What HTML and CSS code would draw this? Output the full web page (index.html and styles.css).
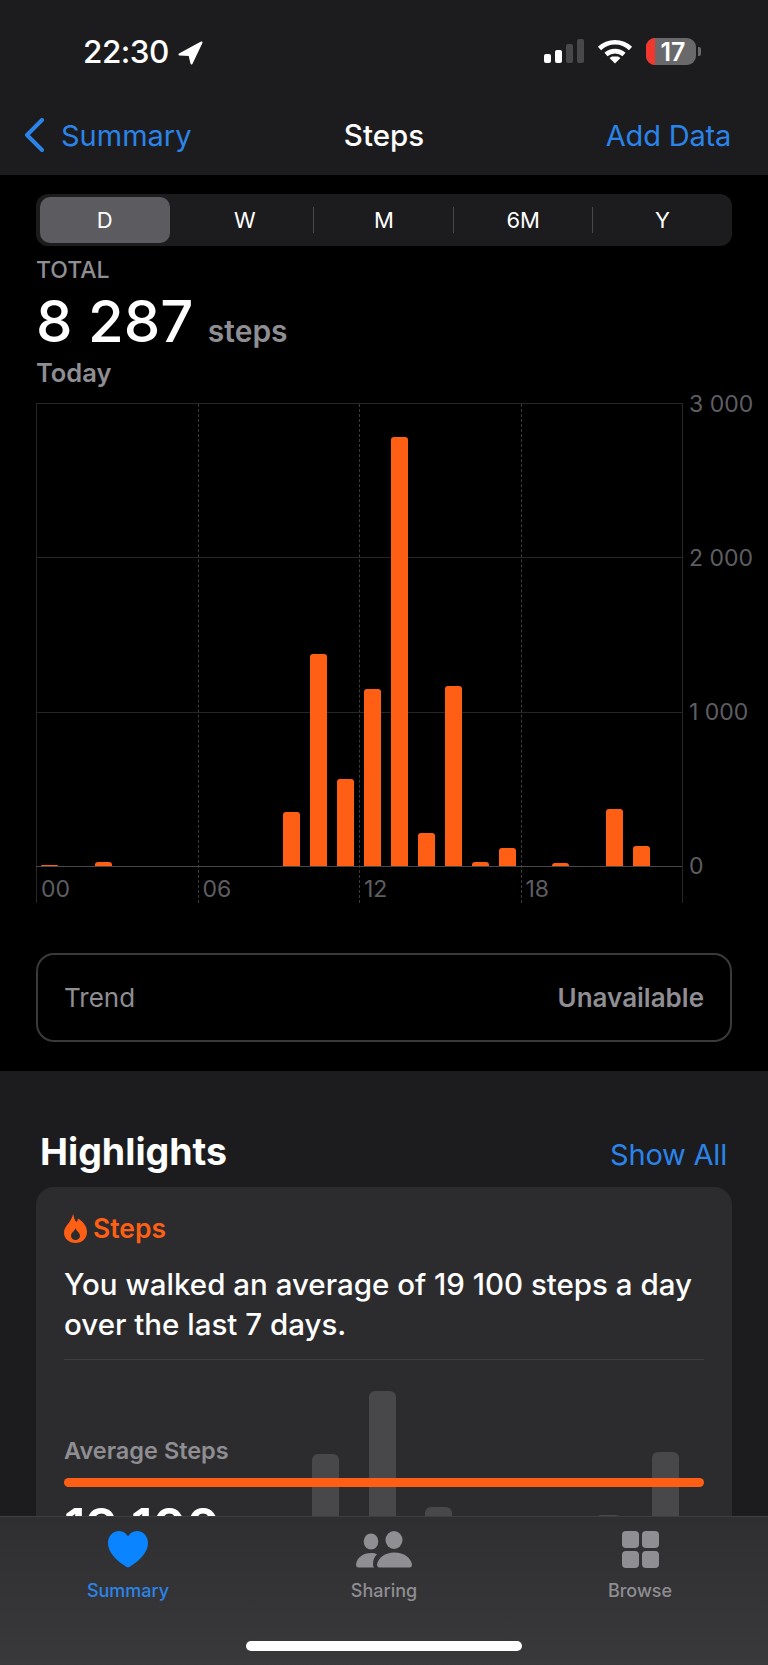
FILE: index.html
```html
<!DOCTYPE html>
<html lang="en">

<head>
    <meta charset="UTF-8">
    <title>Steps</title>
    <link rel="stylesheet" href="styles.css">
</head>

<body>
    <div class="phone">
        <header class="top">
            <div class="status">
                <div class="status-time">
                    <span>22:30</span>
                    <svg class="arrow" viewBox="0 0 25 24"><path d="M23.5 1.5 L1.5 13.5 L11.5 14 L13.5 22.5 Z" /></svg>
                </div>
                <div class="status-icons">
                    <div class="signal">
                        <i class="s1"></i>
                        <i class="s2"></i>
                        <i class="s3"></i>
                        <i class="s4"></i>
                    </div>
                    <svg class="wifi" viewBox="0 0 36 25">
                        <path d="M2.5 9.5 C11 1.2 25 1.2 33.5 9.5" />
                        <path d="M9 15.5 C14 11 22 11 27 15.5" />
                        <polygon class="wifi-dot" points="18,24.5 12.5,19 15,17.5 21,17.5 23.5,19" />
                    </svg>
                    <div class="battery">
                        <div class="battery-body">
                            <span class="battery-low"></span>
                            <span class="battery-num">17</span>
                        </div>
                        <span class="battery-nub"></span>
                    </div>
                </div>
            </div>
            <nav class="nav">
                <a class="nav-back">
                    <svg class="chevron" viewBox="0 0 21 34"><polyline points="18,2 3,17 18,32" /></svg>
                    Summary
                </a>
                <div class="nav-title">Steps</div>
                <a class="nav-add">Add Data</a>
            </nav>
        </header>

        <section class="steps">
            <div class="segments">
                <div class="seg seg-on"><span>D</span></div>
                <div class="seg">W</div>
                <div class="seg seg-line">M</div>
                <div class="seg seg-line">6M</div>
                <div class="seg seg-line">Y</div>
            </div>

            <div class="total-label">TOTAL</div>
            <div class="total"><span class="total-num">8 287</span> <span class="total-unit">steps</span></div>
            <div class="total-day">Today</div>

            <div class="chart">
                <div class="plot">
                    <div class="hour"><span>00</span></div>
                    <div class="hour"><span>06</span></div>
                    <div class="hour"><span>12</span></div>
                    <div class="hour"><span>18</span></div>
                    <div class="rows">
                        <div class="row"></div>
                        <div class="row"></div>
                        <div class="row"></div>
                    </div>
                    <div class="bars">
                        <i style="height:1px"></i>
                        <i></i>
                        <i style="height:4px"></i>
                        <i></i><i></i><i></i><i></i><i></i><i></i>
                        <i style="height:54px"></i>
                        <i style="height:212px"></i>
                        <i style="height:87px"></i>
                        <i style="height:177px"></i>
                        <i style="height:429px"></i>
                        <i style="height:33px"></i>
                        <i style="height:180px"></i>
                        <i style="height:4px"></i>
                        <i style="height:18px"></i>
                        <i></i>
                        <i style="height:3px"></i>
                        <i></i>
                        <i style="height:57px"></i>
                        <i style="height:20px"></i>
                        <i></i>
                    </div>
                </div>
                <div class="y-axis">
                    <span>3 000</span>
                    <span>2 000</span>
                    <span>1 000</span>
                    <span>0</span>
                </div>
            </div>

            <div class="trend">
                <span class="trend-name">Trend</span>
                <span class="trend-value">Unavailable</span>
            </div>
        </section>

        <section class="highlights">
            <div class="high-head">
                <h2>Highlights</h2>
                <a>Show All</a>
            </div>
            <div class="card">
                <div class="card-tag">
                    <svg class="flame" viewBox="0 0 23 29">
                        <path fill-rule="evenodd" d="M9 0 C10.5 3.5 10 5.5 12.5 8 C13.5 6.8 14 6 14 4.5 C19.5 8 23 12.5 23 18 C23 24.5 18 29 11.5 29 C5 29 0 24.5 0 18.5 C0 12 7.5 8.5 9 0 Z M11.5 14 C10.5 17.5 7 18.5 7 21.8 C7 24.3 9 26 11.5 26 C14 26 16 24.3 16 21.8 C16 18.5 12.5 17.5 11.5 14 Z" />
                    </svg>
                    Steps
                </div>
                <p class="card-text">You walked an average of 19 100 steps a day over the last 7 days.</p>
                <div class="card-body">
                    <div class="ghost">
                        <i style="height:76px"></i>
                        <i style="height:139px"></i>
                        <i style="height:23px"></i>
                        <i></i>
                        <i></i>
                        <i class="ghost-thin" style="height:15px"></i>
                        <i style="height:78px"></i>
                    </div>
                    <div class="avg-label">Average Steps</div>
                    <div class="avg-line"></div>
                    <div class="avg-num">19 100</div>
                </div>
            </div>
        </section>

        <footer class="tabbar">
            <div class="tab tab-on">
                <svg class="tab-icon" viewBox="0 0 40 37">
                    <path d="M20 36.5 C19.3 36.5 18.4 35.9 17.5 35.3 C7.5 28.8 0 21 0 12 C0 5 4.8 0 11 0 C15 0 18.2 2.2 20 5.5 C21.8 2.2 25 0 29 0 C35.2 0 40 5 40 12 C40 21 32.5 28.8 22.5 35.3 C21.6 35.9 20.7 36.5 20 36.5 Z" />
                </svg>
                <span>Summary</span>
            </div>
            <div class="tab">
                <svg class="tab-icon" viewBox="0 0 56 37">
                    <ellipse cx="15" cy="10.5" rx="7.3" ry="8" />
                    <ellipse cx="38" cy="9" rx="8.5" ry="9" />
                    <path d="M2.5 36.5 C0.5 36.5 0 35 0 33.5 C1 26.5 7 22 15 22 C17.5 22 19.5 22.5 21 23.2 C18.5 25.5 17 28.5 17 33.5 C17 34.5 17.2 35.5 18 36.5 Z" />
                    <path d="M23.5 36.5 C21.5 36.5 21 35 21 33.5 C22 27 29 21.5 38.5 21.5 C48 21.5 55 27 56 33.5 C56 35 55.5 36.5 53.5 36.5 Z" />
                </svg>
                <span>Sharing</span>
            </div>
            <div class="tab">
                <svg class="tab-icon" viewBox="0 0 37 37">
                    <rect x="0" y="0" width="17" height="17" rx="4" />
                    <rect x="20" y="0" width="17" height="17" rx="4" />
                    <rect x="0" y="20" width="17" height="17" rx="4" />
                    <rect x="20" y="20" width="17" height="17" rx="4" />
                </svg>
                <span>Browse</span>
            </div>
            <div class="home-bar"></div>
        </footer>
    </div>
</body>

</html>
```

FILE: styles.css
```css
* {
    box-sizing: border-box;
}

body {
    margin: 0;
    background: #000;
    font-family: Inter, 'Liberation Sans', sans-serif;
    color: #fff;
}

.phone {
    position: relative;
    width: 768px;
    height: 1665px;
    overflow: hidden;
}

/* status bar + nav */
.top {
    height: 175px;
    background: #1c1c1e;
}

.status {
    height: 102px;
    display: flex;
    justify-content: space-between;
    padding: 38px 67px 0 83px;
}

.status-time {
    display: flex;
    align-items: flex-start;
    gap: 9px;
    font-size: 31.5px;
    font-weight: 500;
    line-height: 28px;
    letter-spacing: -0.5px;
}

.arrow {
    width: 25px;
    height: 24px;
    margin-top: 3px;
    fill: #fff;
    stroke: #fff;
    stroke-width: 2;
    stroke-linejoin: round;
}

.status-icons {
    display: flex;
    align-items: flex-start;
    gap: 13px;
}

.signal {
    display: flex;
    align-items: flex-end;
    gap: 4px;
    height: 24px;
    margin-top: 1px;
}

.signal i {
    width: 7px;
    border-radius: 2px;
    background: #fff;
}

.s1 {
    height: 9px;
}

.s2 {
    height: 13px;
}

.signal .s3 {
    height: 19px;
    background: #48484a;
}

.signal .s4 {
    height: 24px;
    background: #48484a;
}

.wifi {
    width: 36px;
    height: 25px;
    margin-top: 1px;
    fill: none;
    stroke: #fff;
    stroke-width: 4.6;
}

.wifi-dot {
    fill: #fff;
    stroke: none;
}

.battery {
    display: flex;
    align-items: center;
    gap: 2px;
}

.battery-body {
    position: relative;
    display: flex;
    align-items: center;
    justify-content: center;
    width: 50px;
    height: 27px;
    border-radius: 9px;
    background: #69696b;
    overflow: hidden;
}

.battery-low {
    position: absolute;
    left: 0;
    top: 0;
    bottom: 0;
    width: 9px;
    background: #f3372e;
}

.battery-num {
    position: relative;
    padding-left: 4px;
    font-size: 25px;
    font-weight: 600;
}

.battery-nub {
    width: 3px;
    height: 9px;
    border-radius: 0 2px 2px 0;
    background: #69696b;
}

.nav {
    display: flex;
    align-items: center;
    justify-content: space-between;
    position: relative;
    height: 66px;
    padding: 0 37px 0 24px;
    font-size: 29px;
    color: #2b84ea;
}

.nav-back {
    display: flex;
    align-items: center;
    gap: 16px;
}

.nav-add {
    letter-spacing: -0.2px;
}

.chevron {
    width: 21px;
    height: 34px;
    fill: none;
    stroke: #2b84ea;
    stroke-width: 4;
    stroke-linecap: round;
    stroke-linejoin: round;
}

.nav-title {
    position: absolute;
    left: 0;
    right: 0;
    text-align: center;
    color: #fff;
    font-size: 29.5px;
    font-weight: 500;
}

/* segmented control */
.steps {
    padding: 19px 36px 29px;
}

.segments {
    display: grid;
    grid-template-columns: repeat(5, 1fr);
    height: 52px;
    border-radius: 12px;
    background: #1c1c1e;
    font-size: 22px;
}

.seg {
    position: relative;
    display: flex;
    align-items: center;
    justify-content: center;
}

.seg-line::before {
    content: '';
    position: absolute;
    left: -1px;
    top: 13px;
    height: 26px;
    width: 1px;
    background: #48484a;
}

.seg-on span {
    display: flex;
    align-items: center;
    justify-content: center;
    width: 130px;
    height: 46px;
    margin-right: 2px;
    border-radius: 10px;
    background: #5c5c60;
}

/* total */
.total-label {
    margin-top: 11px;
    font-size: 23px;
    line-height: 26px;
    font-weight: 500;
    color: #8e8e93;
}

.total {
    height: 60px;
    line-height: 60px;
    margin-top: 8px;
}

.total-num {
    font-size: 58px;
    font-weight: 500;
}

.total-unit {
    margin-left: 10px;
    font-size: 30px;
    font-weight: 600;
    color: #8e8e93;
}

.total-day {
    margin-top: 8px;
    font-size: 25.5px;
    line-height: 28px;
    font-weight: 600;
    color: #8e8e93;
}

/* hourly chart */
.chart {
    display: flex;
    margin-top: 16px;
}

.plot {
    position: relative;
    flex: none;
    display: grid;
    grid-template-columns: repeat(4, 1fr);
    width: 647px;
    height: 500px;
    border-right: 1px solid #262628;
    border-top: 1px solid #262628;
}

.hour {
    display: flex;
    align-items: flex-end;
    padding-left: 4px;
    border-left: 1px dashed #3a3a3c;
    font-size: 23px;
    line-height: 28px;
    color: #5e5e62;
}

.hour:first-child {
    border-left: 1px solid #262628;
}

.rows {
    position: absolute;
    left: 0;
    right: 0;
    top: 0;
    height: 463px;
    display: flex;
    flex-direction: column;
}

.row {
    flex: 1;
    border-bottom: 1px solid #262628;
}

.row:last-child {
    border-bottom-color: #48484a;
}

.bars {
    position: absolute;
    left: 0;
    right: 0;
    top: 0;
    height: 462px;
    display: grid;
    grid-template-columns: repeat(24, 1fr);
    align-items: end;
    justify-items: center;
}

.bars i {
    width: 17px;
    border-radius: 3px 3px 0 0;
    background: #ff5f15;
}

.y-axis {
    flex: none;
    display: flex;
    flex-direction: column;
    justify-content: space-between;
    height: 490px;
    margin: -13px 0 0 6px;
    font-size: 23px;
    line-height: 28px;
    white-space: nowrap;
    color: #5e5e62;
}

/* trend */
.trend {
    display: flex;
    align-items: center;
    justify-content: space-between;
    height: 89px;
    margin-top: 50px;
    padding: 0 26px;
    border: 2px solid #3a3a3c;
    border-radius: 18px;
    font-size: 26px;
    color: #8e8e93;
}

.trend-value {
    font-weight: 600;
}

/* highlights */
.highlights {
    min-height: 600px;
    padding: 0 36px;
    background: #1c1c1e;
}

.high-head {
    display: flex;
    align-items: baseline;
    justify-content: space-between;
    padding: 54px 5px 8px 4px;
}

.high-head h2 {
    margin: 0;
    font-size: 37.5px;
    line-height: 54px;
    font-weight: 700;
}

.high-head a {
    font-size: 29px;
    letter-spacing: -0.2px;
    color: #2b84ea;
}

.card {
    padding: 26px 28px 0 28px;
    border-radius: 18px;
    background: #2c2c2e;
}

.card-tag {
    display: flex;
    align-items: center;
    gap: 6px;
    height: 30px;
    font-size: 26.5px;
    font-weight: 600;
    color: #ff5f15;
}

.flame {
    width: 23px;
    height: 29px;
    fill: #ff5f15;
}

.card-text {
    margin: 22px 0 0;
    padding-bottom: 15px;
    border-bottom: 1px solid #3f3f41;
    font-size: 29.5px;
    line-height: 39.5px;
    font-weight: 500;
}

.card-body {
    position: relative;
    height: 240px;
    padding-top: 78px;
}

.ghost {
    position: absolute;
    left: 248px;
    top: 0;
    height: 170px;
    display: grid;
    grid-template-columns: repeat(7, 56.7px);
    align-items: end;
}

.ghost i {
    width: 27px;
    border-radius: 6px 6px 0 0;
    background: #48484a;
}

.avg-label {
    position: relative;
    font-size: 23.5px;
    line-height: 26px;
    font-weight: 600;
    color: #8e8e93;
}

.avg-line {
    position: relative;
    height: 9px;
    margin-top: 14px;
    border-radius: 5px;
    background: #ff5f15;
}

.avg-num {
    position: relative;
    margin-top: 15px;
    font-size: 51px;
    line-height: 50px;
    font-weight: 600;
}

/* tab bar */
.tabbar {
    position: absolute;
    left: 0;
    right: 0;
    bottom: 0;
    height: 149px;
    display: grid;
    grid-template-columns: repeat(3, 1fr);
    padding-top: 14px;
    border-top: 1px solid #3e3e40;
    background: linear-gradient(#2f2f31, #39393b);
    font-size: 18px;
    color: #8e8e93;
}

.tab {
    display: flex;
    flex-direction: column;
    align-items: center;
}

.tab span {
    margin-top: 11px;
    line-height: 24px;
    font-weight: 500;
}

.tab-icon {
    height: 37px;
    fill: #8e8e93;
}

.tab-on {
    color: #2b84ea;
}

.tab-on .tab-icon {
    fill: #0a84ff;
}

.home-bar {
    position: absolute;
    left: 246px;
    bottom: 14px;
    width: 276px;
    height: 10px;
    border-radius: 5px;
    background: #fff;
}
```
